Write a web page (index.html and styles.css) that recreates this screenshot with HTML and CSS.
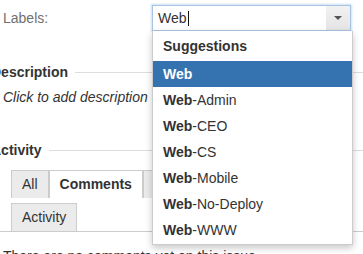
FILE: index.html
```html
<!DOCTYPE html>
<html lang="en">
<head>
  <meta charset="UTF-8" />
  <title>Issue labels</title>
  <link rel="stylesheet" href="styles.css">
</head>
<body>
  <div class="page">
    <div class="field">
      <label class="field-label">Labels:</label>
      <div class="picker">
        <div class="picker-input">
          <span class="typed">Web</span><span class="caret"></span>
          <span class="picker-toggle"><span class="arrow"></span></span>
        </div>
        <div class="suggestions">
          <div class="suggest-head">Suggestions</div>
          <div class="suggest active"><b>Web</b></div>
          <div class="suggest"><b>Web</b>-Admin</div>
          <div class="suggest"><b>Web</b>-CEO</div>
          <div class="suggest"><b>Web</b>-CS</div>
          <div class="suggest"><b>Web</b>-Mobile</div>
          <div class="suggest"><b>Web</b>-No-Deploy</div>
          <div class="suggest"><b>Web</b>-WWW</div>
        </div>
      </div>
    </div>

    <h2 class="module-head">Description</h2>
    <div class="desc">Click to add description</div>

    <h2 class="module-head activity-head">Activity</h2>
    <div class="tabs">
      <span class="tab">All</span>
      <span class="tab active">Comments</span>
      <span class="tab">Work Log</span>
      <span class="tab">History</span>
      <span class="tab">Activity</span>
    </div>
    <div class="empty">There are no comments yet on this issue.</div>
  </div>
</body>
</html>
```

FILE: styles.css
```css
body {
  margin: 0;
  font-family: "Liberation Sans", Arial, sans-serif;
  font-size: 14px;
  color: #333;
  background: #fff;
  overflow: hidden;
}
.page {
  width: 363px;
}
.field {
  display: flex;
  align-items: center;
  padding-top: 5px;
  height: 26px;
}
.field-label {
  width: 149px;
  padding-left: 3px;
  color: #707070;
}
.picker {
  position: relative;
  width: 199px;
}
.picker-input {
  display: flex;
  align-items: center;
  height: 24px;
  padding-left: 5px;
  border: 1px solid #a9c3e2;
  box-shadow: 0 0 2px 1px rgba(110, 160, 220, 0.35);
  background: #fff;
}
.typed {
  line-height: 24px;
}
.caret {
  width: 1px;
  height: 15px;
  margin-left: 1px;
  background: #111;
}
.picker-toggle {
  margin-left: auto;
  width: 24px;
  height: 24px;
  display: flex;
  align-items: center;
  justify-content: center;
  background: linear-gradient(#f2f2f2, #e4e4e4);
}
.arrow {
  width: 0;
  height: 0;
  border-left: 4px solid transparent;
  border-right: 4px solid transparent;
  border-top: 4px solid #555;
  margin-top: -1px;
}
.suggestions {
  position: absolute;
  top: 26px;
  left: 0;
  width: 199px;
  background: #fff;
  border: 1px solid #ccc;
  border-top: none;
  box-shadow: 0 3px 7px rgba(0, 0, 0, 0.22);
  z-index: 5;
  padding-bottom: 1px;
}
.suggest-head {
  height: 30px;
  line-height: 30px;
  padding-left: 10px;
  font-weight: bold;
}
.suggest {
  height: 26px;
  line-height: 26px;
  padding-left: 10px;
}
.suggest.active {
  background: #3572b0;
  color: #fff;
}
.module-head {
  display: flex;
  align-items: center;
  margin: 31px 0 0 -9px;
  font-size: 14px;
  line-height: 20px;
  font-weight: bold;
}
.module-head::after {
  content: "";
  flex: 1;
  height: 1px;
  margin-left: 7px;
  background: #ddd;
}
.desc {
  margin-top: 5px;
  padding-left: 3px;
  line-height: 20px;
  font-style: italic;
}
.activity-head {
  margin-top: 33px;
}
.tabs {
  display: flex;
  flex-wrap: wrap;
  row-gap: 5px;
  margin-top: 10px;
  padding: 0 70px 0 11px;
  border-bottom: 1px solid #ccc;
}
.tab {
  height: 27px;
  line-height: 27px;
  padding: 0 10px;
  border: 1px solid #ccc;
  border-bottom: none;
  background: #ebebeb;
  color: #333;
}
.tab.active {
  background: #fff;
  font-weight: bold;
}
.empty {
  margin-top: 14px;
  padding-left: 3px;
  line-height: 20px;
}
```
